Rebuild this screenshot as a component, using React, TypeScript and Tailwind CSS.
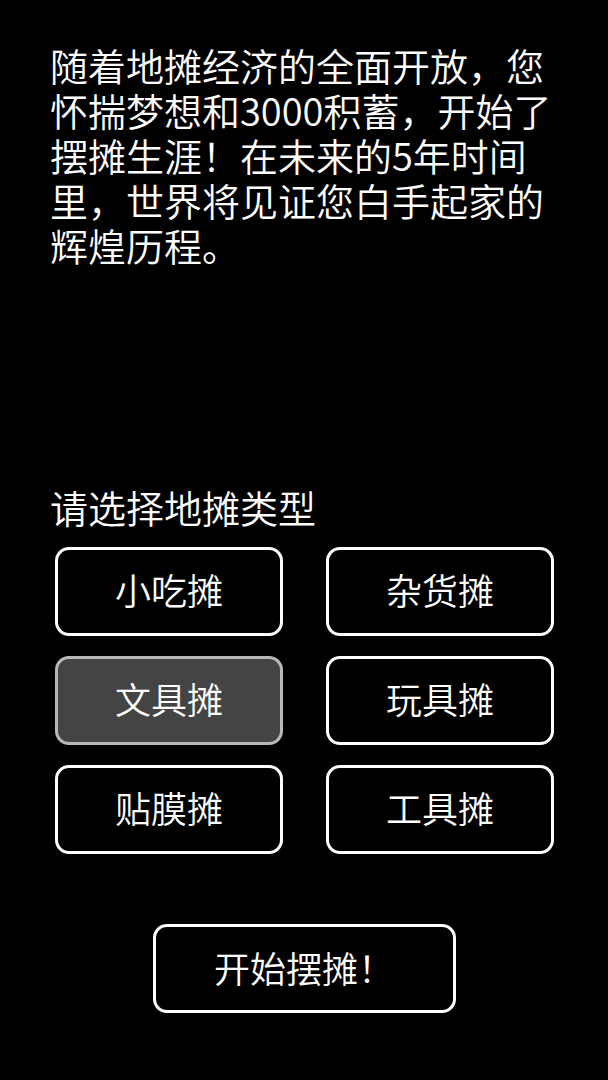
import React from "react";

const font = { fontFamily: '"Noto Sans CJK SC", "Noto Sans", sans-serif' };

const lines = [
  "随着地摊经济的全面开放，您",
  "怀揣梦想和3000积蓄，开始了",
  "摆摊生涯！在未来的5年时间",
  "里，世界将见证您白手起家的",
  "辉煌历程。",
];

const options = ["小吃摊", "杂货摊", "文具摊", "玩具摊", "贴膜摊", "工具摊"];

export default function App() {
  const selected = "文具摊";
  return (
    <div className="w-[608px] h-[1080px] bg-black text-white overflow-hidden font-[350]" style={font}>
      <div className="pt-[42px] pl-[50px] text-[38px] leading-[45px]">
        {lines.map((l) => (
          <div key={l} className="whitespace-nowrap">
            {l}
          </div>
        ))}
      </div>
      <div className="mt-[217px] pl-[50px] text-[38px] leading-[45px] whitespace-nowrap">
        请选择地摊类型
      </div>
      <div className="mt-[18px] ml-[55px] grid grid-cols-[228px_228px] gap-x-[43px] gap-y-[20px]">
        {options.map((o) => (
          <div
            key={o}
            className={
              o === selected
                ? "h-[89px] pb-[5px] flex items-center justify-center rounded-[14px] border-[3px] border-[#b8b8b8] bg-[#444444] text-[36px]"
                : "h-[89px] pb-[5px] flex items-center justify-center rounded-[14px] border-[3px] border-white bg-black text-[36px]"
            }
          >
            {o}
          </div>
        ))}
      </div>
      <div className="mt-[70px] flex justify-center">
        <div className="w-[303px] h-[89px] pb-[4px] flex items-center justify-center rounded-[14px] border-[3px] border-white text-[36px]">
          开始摆摊！
        </div>
      </div>
    </div>
  );
}
